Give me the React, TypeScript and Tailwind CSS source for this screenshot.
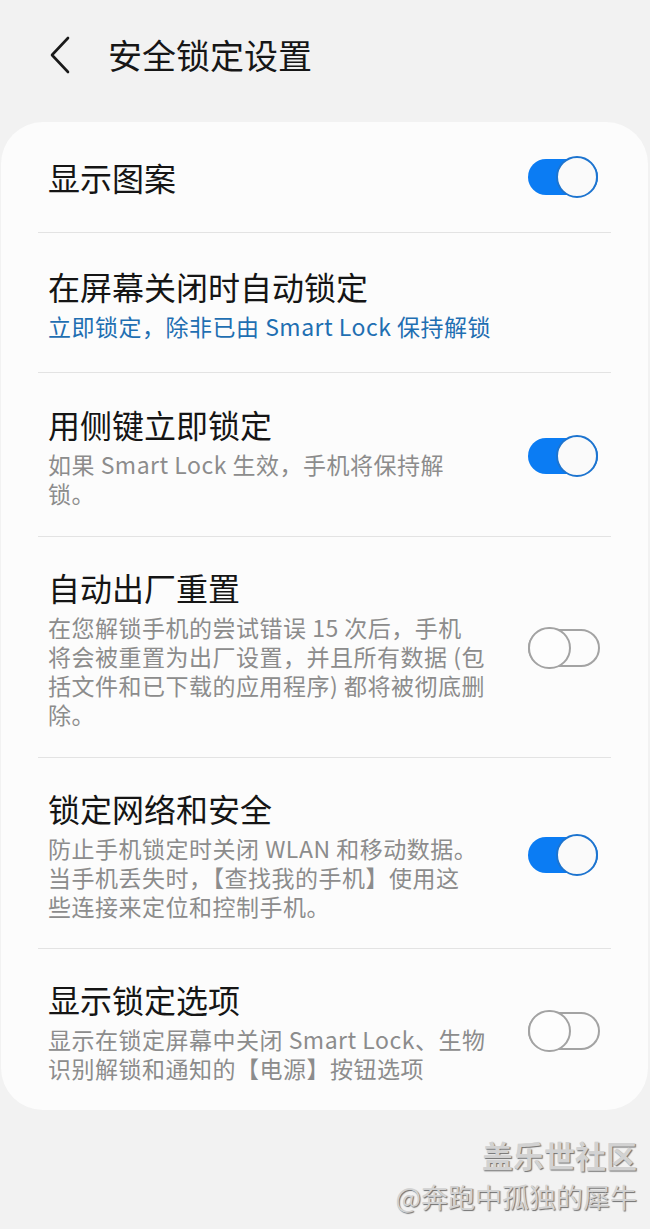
import React from "react";

type Item = {
  title: string;
  desc?: string[];
  blue?: boolean;
  toggle?: boolean | null;
  pad: string;
};

const items: Item[] = [
  { title: "显示图案", toggle: true, pad: "py-[34px]" },
  {
    title: "在屏幕关闭时自动锁定",
    desc: ["立即锁定，除非已由 Smart Lock 保持解锁"],
    blue: true,
    toggle: null,
    pad: "pt-[33px] pb-[31px]",
  },
  {
    title: "用侧键立即锁定",
    desc: ["如果 Smart Lock 生效，手机将保持解", "锁。"],
    toggle: true,
    pad: "pt-[31px] pb-[28px]",
  },
  {
    title: "自动出厂重置",
    desc: [
      "在您解锁手机的尝试错误 15 次后，手机",
      "将会被重置为出厂设置，并且所有数据 (包",
      "括文件和已下载的应用程序) 都将被彻底删",
      "除。",
    ],
    toggle: false,
    pad: "pt-[30px] pb-[28px]",
  },
  {
    title: "锁定网络和安全",
    desc: [
      "防止手机锁定时关闭 WLAN 和移动数据。",
      "当手机丢失时，【查找我的手机】使用这",
      "些连接来定位和控制手机。",
    ],
    toggle: true,
    pad: "pt-[30px] pb-[27px]",
  },
  {
    title: "显示锁定选项",
    desc: ["显示在锁定屏幕中关闭 Smart Lock、生物", "识别解锁和通知的【电源】按钮选项"],
    toggle: false,
    pad: "pt-[30px] pb-[27px]",
  },
];

const Switch = ({ on }: { on: boolean }) => (
  <div className="relative w-[72px] h-[42px] shrink-0">
    {on ? (
      <>
        <div className="absolute left-0 top-[3px] w-[70px] h-[36px] rounded-full bg-[#0b7cf3]" />
        <div className="absolute right-[2px] top-0 w-[42px] h-[42px] rounded-full bg-[#fafafa] border-2 border-[#1d74cf]" />
      </>
    ) : (
      <>
        <div className="absolute left-0 top-[2px] w-[72px] h-[38px] rounded-full border-2 border-[#a3a3a3]" />
        <div className="absolute left-0 top-0 w-[43px] h-[42px] rounded-full bg-[#fdfdfd] border-2 border-[#a3a3a3]" />
      </>
    )}
  </div>
);

export default function App() {
  return (
    <div
      className="w-[650px] min-h-[1229px] bg-[#f2f2f2] overflow-hidden"
      style={{ fontFamily: '"Noto Sans CJK SC", "Noto Sans", sans-serif' }}
    >
      {/* header */}
      <div className="h-[110px] flex items-center">
        <svg width="22" height="38" viewBox="0 0 22 38" className="ml-[49px]">
          <path d="M19 2 L3 19 L19 36" fill="none" stroke="#1a1a1a" strokeWidth="2.6" strokeLinecap="round" strokeLinejoin="round" />
        </svg>
        <h1 className="ml-[37px] text-[34px] leading-[40px] text-[#161616] font-normal">安全锁定设置</h1>
      </div>

      {/* card */}
      <div className="mt-[12px] ml-[1px] mr-[2px] bg-[#fcfcfc] rounded-[42px]">
        {items.map((it, i) => (
          <div key={i}>
            {i > 0 && <div className="mx-[37px] h-px bg-[#e3e3e3]" />}
            <div className={`flex items-center pl-[47px] pr-[48px] ${it.pad}`}>
              <div className="flex-1">
                <div className="text-[32px] leading-[40px] text-[#151515]">{it.title}</div>
                {it.desc && (
                  <div
                    className={`mt-[6px] text-[23px] leading-[29px] tracking-[0.5px] whitespace-nowrap ${
                      it.blue ? "text-[#1f6fb2]" : "text-[#8c8c8c]"
                    }`}
                  >
                    {it.desc.map((line, j) => (
                      <div key={j}>{line}</div>
                    ))}
                  </div>
                )}
              </div>
              {it.toggle !== null && it.toggle !== undefined && <Switch on={it.toggle} />}
            </div>
          </div>
        ))}
      </div>

      {/* watermark */}
      <div className="mt-[28px] pr-[13px] flex flex-col items-end text-[#d2d2d2] [text-shadow:1px_1px_1px_#6f6f6f]">
        <div className="text-[31px] leading-[34px] font-bold">盖乐世社区</div>
        <div className="mt-[8px] text-[27px] leading-[34px]">@奔跑中孤独的犀牛</div>
      </div>
    </div>
  );
}
